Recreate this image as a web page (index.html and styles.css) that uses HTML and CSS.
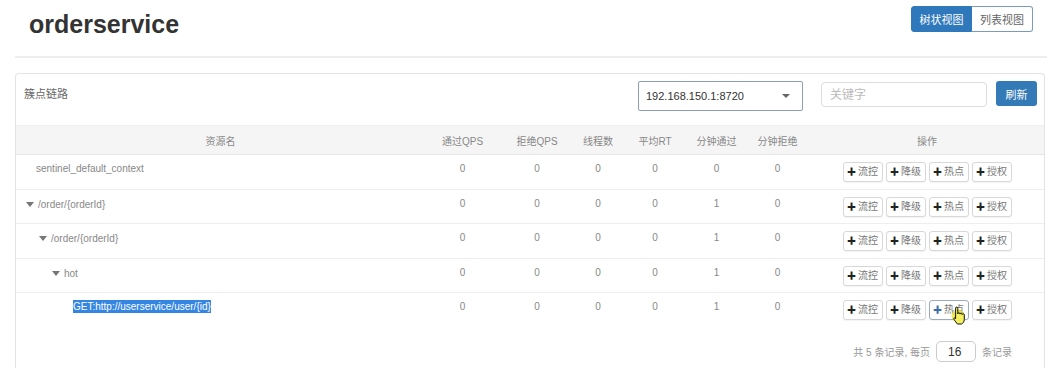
FILE: index.html
```html
<!DOCTYPE html>
<html lang="zh">
<head>
  <meta charset="UTF-8">
  <title>orderservice</title>
  <link rel="stylesheet" href="styles.css">
</head>
<body>
  <div class="page-header">
    <h1>orderservice</h1>
    <div class="view-switch">
      <button class="btn-view active">树状视图</button>
      <button class="btn-view">列表视图</button>
    </div>
  </div>

  <div class="panel">
    <div class="panel-heading">
      <span class="panel-title">簇点链路</span>
      <div class="toolbar">
        <div class="machine-select">
          <span>192.168.150.1:8720</span>
          <span class="caret"></span>
        </div>
        <input class="search" type="text" placeholder="关键字">
        <button class="btn-refresh">刷新</button>
      </div>
    </div>

    <table class="tree-table">
      <colgroup>
        <col style="width: 409px">
        <col style="width: 75px">
        <col style="width: 74px">
        <col style="width: 48px">
        <col style="width: 66px">
        <col style="width: 57px">
        <col style="width: 65px">
        <col>
      </colgroup>
      <thead>
        <tr>
          <th>资源名</th>
          <th>通过QPS</th>
          <th>拒绝QPS</th>
          <th>线程数</th>
          <th>平均RT</th>
          <th>分钟通过</th>
          <th>分钟拒绝</th>
          <th>操作</th>
        </tr>
      </thead>
      <tbody>
        <tr>
          <td class="name"><span class="leaf"></span>sentinel_default_context</td>
          <td>0</td><td>0</td><td>0</td><td>0</td><td>0</td><td>0</td>
          <td class="ops">
            <button class="btn-op"><b>✚</b>流控</button><button class="btn-op"><b>✚</b>降级</button><button class="btn-op"><b>✚</b>热点</button><button class="btn-op"><b>✚</b>授权</button>
          </td>
        </tr>
        <tr>
          <td class="name"><span class="toggle"></span>/order/{orderId}</td>
          <td>0</td><td>0</td><td>0</td><td>0</td><td>1</td><td>0</td>
          <td class="ops">
            <button class="btn-op"><b>✚</b>流控</button><button class="btn-op"><b>✚</b>降级</button><button class="btn-op"><b>✚</b>热点</button><button class="btn-op"><b>✚</b>授权</button>
          </td>
        </tr>
        <tr>
          <td class="name"><span class="indent"></span><span class="toggle"></span>/order/{orderId}</td>
          <td>0</td><td>0</td><td>0</td><td>0</td><td>1</td><td>0</td>
          <td class="ops">
            <button class="btn-op"><b>✚</b>流控</button><button class="btn-op"><b>✚</b>降级</button><button class="btn-op"><b>✚</b>热点</button><button class="btn-op"><b>✚</b>授权</button>
          </td>
        </tr>
        <tr>
          <td class="name"><span class="indent"></span><span class="indent"></span><span class="toggle"></span>hot</td>
          <td>0</td><td>0</td><td>0</td><td>0</td><td>1</td><td>0</td>
          <td class="ops">
            <button class="btn-op"><b>✚</b>流控</button><button class="btn-op"><b>✚</b>降级</button><button class="btn-op"><b>✚</b>热点</button><button class="btn-op"><b>✚</b>授权</button>
          </td>
        </tr>
        <tr>
          <td class="name"><span class="indent"></span><span class="indent"></span><span class="indent"></span><span class="leaf short"></span><span class="selected">GET:http://userservice/user/{id}</span></td>
          <td>0</td><td>0</td><td>0</td><td>0</td><td>1</td><td>0</td>
          <td class="ops">
            <button class="btn-op"><b>✚</b>流控</button><button class="btn-op"><b>✚</b>降级</button><button class="btn-op hover"><b>✚</b>热点
              <svg class="cursor" width="16" height="20" viewBox="0 0 16 20">
                <circle cx="7" cy="10" r="6.5" fill="#e8e020" opacity="0.75"/>
                <path d="M4.6 2.2a1.1 1.1 0 0 1 2.2 0v5.6a1.1 1.1 0 0 1 2.2 0.3a1.1 1.1 0 0 1 2.2 0.4a1.1 1.1 0 0 1 2.1 0.6v4.3c0 2.2-1.2 3.8-2.6 4.6h-4.3c-0.9-1-2.3-3-3.5-4.8c-0.5-0.8 0.2-1.7 1.1-1.1l0.6 0.6z" fill="#f4ef60" stroke="#111" stroke-width="1"/>
              </svg>
            </button><button class="btn-op"><b>✚</b>授权</button>
          </td>
        </tr>
      </tbody>
    </table>

    <div class="pager">
      <span>共 5 条记录, 每页</span>
      <input class="page-size" type="text" value="16">
      <span>条记录</span>
    </div>
  </div>
</body>
</html>
```

FILE: styles.css
```css
/* Reset */
* {
  box-sizing: border-box;
  margin: 0;
  padding: 0;
}

body {
  font-family: "Liberation Sans", Arial, "Noto Sans CJK SC", sans-serif;
  background: #fff;
  color: #666;
  height: 368px;
  overflow: hidden;
}

/* Kopfzeile */
.page-header {
  display: flex;
  justify-content: space-between;
  align-items: flex-start;
  margin-left: 15px;
  height: 58px;
  border-bottom: 2px solid #eee;
}

.page-header h1 {
  font-size: 25px;
  line-height: 28px;
  font-weight: bold;
  color: #333;
  padding: 10px 0 0 14px;
}

.view-switch {
  display: flex;
  margin: 6px 14px 0 0;
}

.btn-view {
  height: 26px;
  width: 61px;
  font: inherit;
  font-size: 11px;
  color: #666;
  background: #fff;
  border: 1px solid #7a9bbd;
  cursor: pointer;
}

.btn-view:first-child {
  border-radius: 3px 0 0 3px;
}

.btn-view:last-child {
  border-radius: 0 3px 3px 0;
  border-left: none;
}

.btn-view.active {
  background: #2e78bb;
  border-color: #2e78bb;
  color: #fff;
}

/* Panel */
.panel {
  margin: 15px 2px 0 15px;
  border: 1px solid #e4e4e4;
  border-bottom: none;
  border-radius: 4px 4px 0 0;
  height: 300px;
}

.panel-heading {
  display: flex;
  justify-content: space-between;
  align-items: flex-start;
  height: 51px;
}

.panel-title {
  font-size: 11px;
  color: #666;
  padding: 11px 0 0 8px;
}

.toolbar {
  display: flex;
  align-items: flex-start;
  padding: 7px 7px 0 0;
}

.machine-select {
  width: 165px;
  height: 30px;
  border: 1px solid #8a9fb6;
  border-radius: 2px;
  display: flex;
  align-items: center;
  justify-content: space-between;
  padding: 0 12px 0 7px;
  font-size: 11px;
  color: #333;
}

.caret {
  width: 0;
  height: 0;
  border-left: 4px solid transparent;
  border-right: 4px solid transparent;
  border-top: 4px solid #666;
}

.search {
  width: 166px;
  height: 25px;
  margin: 1px 0 0 18px;
  border: 1px solid #ddd;
  border-radius: 4px;
  padding: 0 8px;
  font: inherit;
  font-size: 12px;
}

.search::placeholder {
  color: #bbb;
}

.btn-refresh {
  width: 41px;
  height: 25px;
  margin-left: 9px;
  background: #337ab7;
  border: none;
  border-radius: 3px;
  color: #fff;
  font: inherit;
  font-size: 11px;
}

/* Tabelle */
.tree-table {
  width: 100%;
  table-layout: fixed;
  border-collapse: collapse;
  font-size: 10px;
  color: #888;
}

.tree-table th {
  height: 29px;
  font-weight: normal;
  background: #f5f5f5;
  border-top: 1px solid #eee;
  border-bottom: 1px solid #e6e6e6;
  vertical-align: middle;
  text-align: center;
}

.tree-table td {
  height: 34.5px;
  line-height: 14px;
  padding-top: 7px;
  vertical-align: top;
  text-align: center;
  border-bottom: 1px solid #eee;
}

.tree-table tbody tr:last-child td {
  border-bottom: none;
}

.tree-table td.name {
  text-align: left;
  padding-left: 10px;
}

.indent {
  display: inline-block;
  width: 13px;
}

.leaf {
  display: inline-block;
  width: 10px;
}

.leaf.short {
  width: 8px;
}

.toggle {
  display: inline-block;
  width: 12px;
  vertical-align: 1px;
}

.toggle::before {
  content: "";
  display: inline-block;
  border-left: 4px solid transparent;
  border-right: 4px solid transparent;
  border-top: 5px solid #777;
}

.selected {
  background: #3586e3;
  color: #fff;
  padding: 1px 0;
}

.tree-table td.ops {
  padding-top: 7px;
  white-space: nowrap;
}

.btn-op {
  position: relative;
  width: 40px;
  height: 20px;
  margin: 0 1.5px;
  background: #fff;
  border: 1px solid #d8d8d8;
  border-radius: 3px;
  font: inherit;
  font-size: 10px;
  color: #777;
  box-shadow: 0 1px 1px rgba(0, 0, 0, 0.05);
}

.btn-op b {
  color: #222;
  margin-right: 2px;
  font-size: 9px;
}

.btn-op.hover {
  border-color: #9aabbb;
}

.btn-op.hover b {
  color: #3a6fa8;
}

.cursor {
  position: absolute;
  left: 21px;
  top: 5px;
}

/* Seitenfuß */
.pager {
  display: flex;
  justify-content: flex-end;
  align-items: center;
  gap: 6px;
  padding: 14px 32px 0 0;
  font-size: 10px;
  color: #999;
}

.page-size {
  width: 40px;
  height: 21px;
  border: 1px solid #ccc;
  border-radius: 5px;
  padding-left: 11px;
  font: inherit;
  font-size: 12px;
  color: #333;
}
```
